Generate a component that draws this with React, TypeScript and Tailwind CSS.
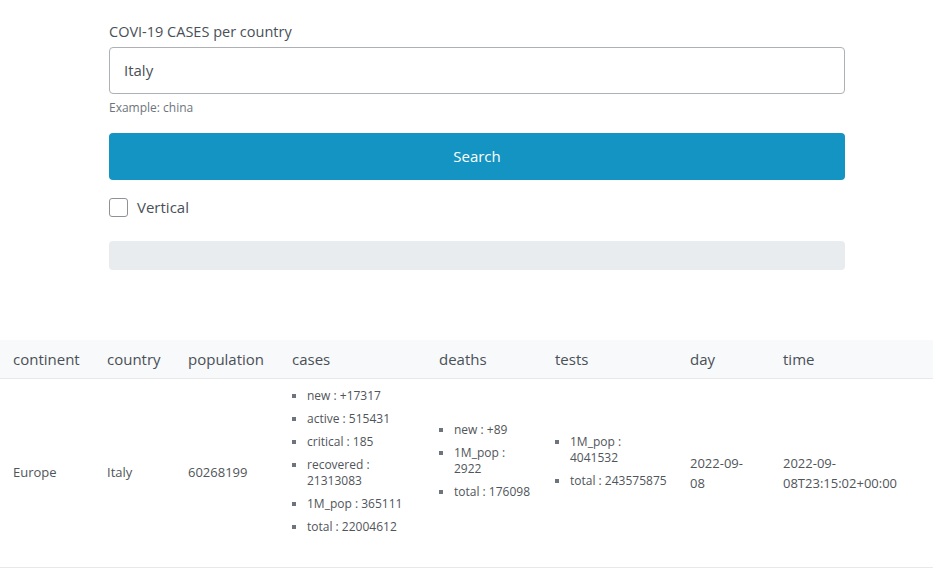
import React from "react";

type Col = { key: string; label: string; width: string };

const cols: Col[] = [
  { key: "continent", label: "continent", width: "w-[94px]" },
  { key: "country", label: "country", width: "w-[81px]" },
  { key: "population", label: "population", width: "w-[104px]" },
  { key: "cases", label: "cases", width: "w-[147px]" },
  { key: "deaths", label: "deaths", width: "w-[116px]" },
  { key: "tests", label: "tests", width: "w-[135px]" },
  { key: "day", label: "day", width: "w-[93px]" },
  { key: "time", label: "time", width: "w-[163px]" },
];

function Bullets({ items }: { items: React.ReactNode[] }) {
  return (
    <ul className="list-[square] pl-[15px] mb-[23px] text-[12px] leading-[16px] marker:text-[#6c757d]">
      {items.map((it, i) => (
        <li key={i} className="mb-[7px] last:mb-0 whitespace-nowrap">
          {it}
        </li>
      ))}
    </ul>
  );
}

export default function App() {
  return (
    <div
      className="min-h-[588px] bg-white text-[#495057]"
      style={{ fontFamily: '"Open Sans", "Segoe UI", sans-serif' }}
    >
      <div className="ml-[109px] w-[736px] pt-[21px]">
        <label className="block text-[14.5px] leading-[21px] mb-[5px]">COVI-19 CASES per country</label>
        <div className="h-[47px] border border-[#adb0b4] rounded-[4px] px-[14px] flex items-center text-[15px]">
          Italy
        </div>
        <div className="mt-[5px] text-[12px] leading-[18px] text-[#6c757d]">Example: china</div>
        <button className="mt-[16px] w-full h-[47px] rounded-[4px] bg-[#1394c2] text-white text-[15px]">
          Search
        </button>
        <div className="mt-[18px] flex items-center h-[19px]">
          <span className="w-[19px] h-[19px] border border-[#8e9296] rounded-[3px] bg-white" />
          <span className="ml-[9px] text-[15px]">Vertical</span>
        </div>
        <div className="mt-[24px] h-[29px] rounded-[4px] bg-[#e9ecef]" />
      </div>

      <table className="mt-[70px] w-full table-fixed border-collapse">
        <thead>
          <tr className="bg-[#f8f9fa] border-b border-[#e6e8ea]">
            {cols.map((c) => (
              <th
                key={c.key}
                className={`${c.width} h-[38px] px-[13px] text-left font-normal text-[15px] text-[#495057]`}
              >
                {c.label}
              </th>
            ))}
          </tr>
        </thead>
        <tbody>
          <tr className="border-b border-[#e6e8ea] text-[13px] text-[#50555a]">
            <td className="px-[13px] py-[9px] align-middle">Europe</td>
            <td className="px-[13px] py-[9px] align-middle">Italy</td>
            <td className="px-[13px] py-[9px] align-middle">60268199</td>
            <td className="px-[13px] py-[9px] align-middle">
              <Bullets
                items={[
                  "new : +17317",
                  "active : 515431",
                  "critical : 185",
                  <>recovered :<br />21313083</>,
                  "1M_pop : 365111",
                  "total : 22004612",
                ]}
              />
            </td>
            <td className="px-[13px] py-[9px] align-middle">
              <Bullets items={["new : +89", <>1M_pop :<br />2922</>, "total : 176098"]} />
            </td>
            <td className="px-[13px] py-[9px] align-middle">
              <Bullets items={[<>1M_pop :<br />4041532</>, "total : 243575875"]} />
            </td>
            <td className="px-[13px] py-[9px] align-middle leading-[20px]">
              2022-09-<br />08
            </td>
            <td className="px-[13px] py-[9px] align-middle leading-[20px]">
              2022-09-<br />08T23:15:02+00:00
            </td>
          </tr>
        </tbody>
      </table>
    </div>
  );
}
